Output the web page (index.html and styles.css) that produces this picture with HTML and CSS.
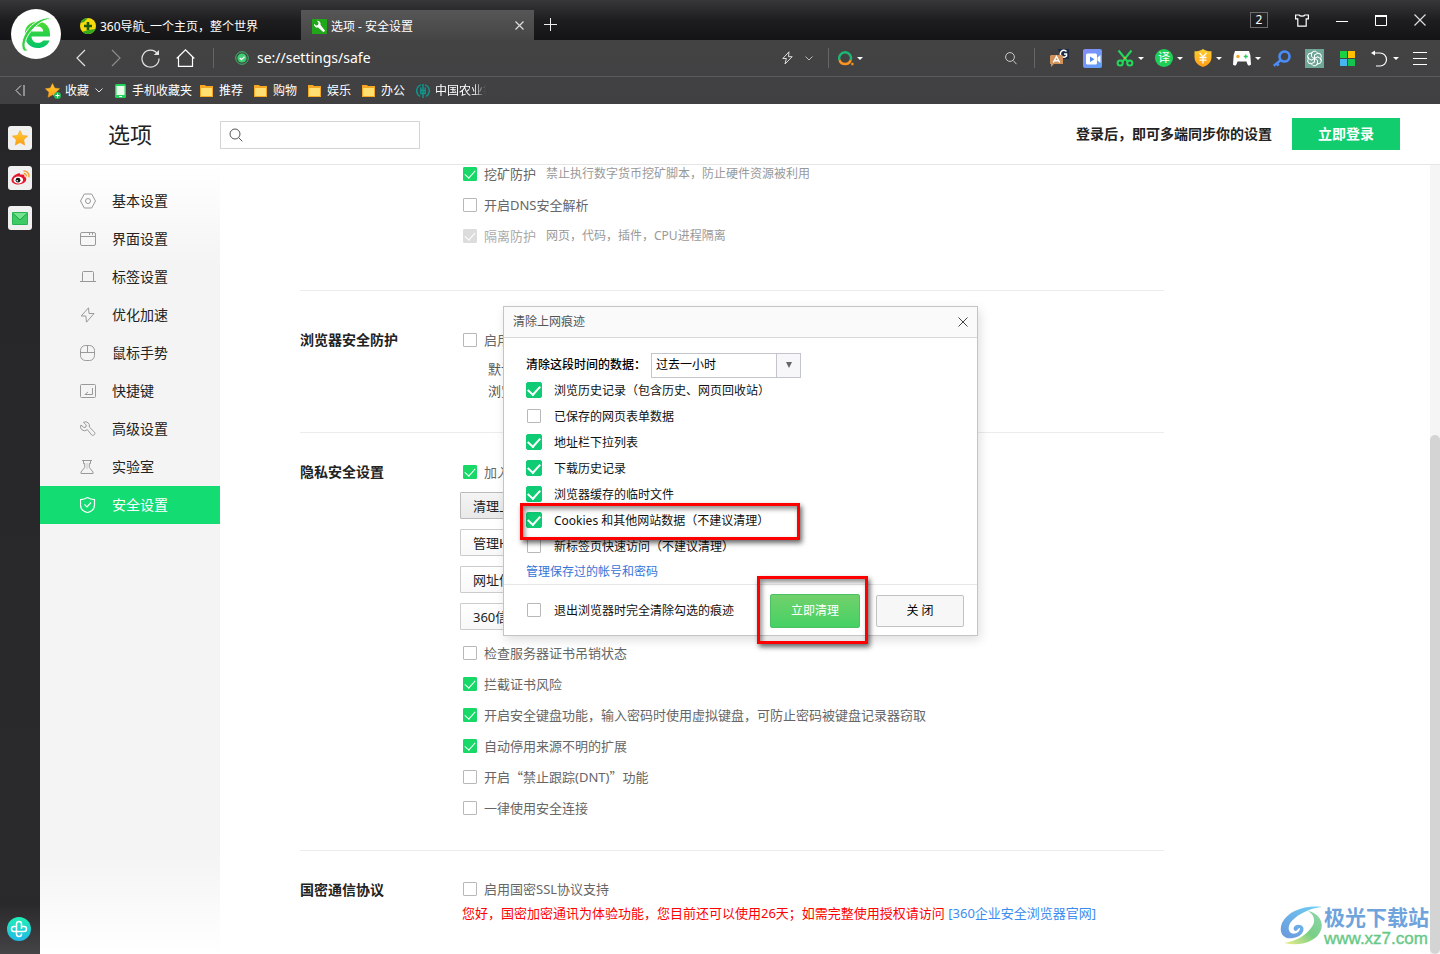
FILE: index.html
```html
<!DOCTYPE html>
<html lang="zh-CN">
<head>
<meta charset="utf-8">
<title>选项 - 安全设置</title>
<link rel="stylesheet" href="styles.css">
</head>
<body>
<svg class="defs" width="0" height="0" aria-hidden="true">
  <defs>
    <linearGradient id="gGreen" x1="0" y1="0" x2="0" y2="1"><stop offset="0" stop-color="#4fdc2c"/><stop offset="1" stop-color="#00c46a"/></linearGradient>
    <linearGradient id="gGold" x1="0" y1="0" x2="0" y2="1"><stop offset="0" stop-color="#ffcf2e"/><stop offset="1" stop-color="#ff9c17"/></linearGradient>
    <linearGradient id="gCam" x1="0" y1="0" x2="1" y2="1"><stop offset="0" stop-color="#8a8cf8"/><stop offset="1" stop-color="#5aa2fb"/></linearGradient>
    <linearGradient id="gTeal" x1="0" y1="0" x2="0" y2="1"><stop offset="0" stop-color="#1ff0b4"/><stop offset="1" stop-color="#22b8e8"/></linearGradient>
    <linearGradient id="gSwirl" x1="0" y1="1" x2="1" y2="0"><stop offset="0" stop-color="#6a97dc"/><stop offset="1" stop-color="#6fd0f5"/></linearGradient>
    <linearGradient id="gLeaf" x1="0" y1="1" x2="1" y2="0"><stop offset="0" stop-color="#f0ee8a"/><stop offset=".5" stop-color="#79cf85"/><stop offset="1" stop-color="#8fd6b0"/></linearGradient>
    <symbol id="folder" viewBox="0 0 13 12"><path d="M0 0h5l1 1h7v11H0z" fill="#f5a623"/><path d="M1 3h11v8H1z" fill="#ffdf72"/></symbol>
    <symbol id="caret" viewBox="0 0 6 3"><path d="M0 0h6L3 3z" fill="#fff"/></symbol>
    <symbol id="star" viewBox="0 0 16 16"><path d="M8 .6l2.300 4.800 5.300.7-3.900 3.700 1 5.300L8 12.500l-4.700 2.600 1-5.300L.4 6.100l5.300-.7z" fill="url(#gGold)" stroke="#f3a01c" stroke-width=".6"/></symbol>
  </defs>
</svg>

<header class="chrome">
  <button class="logo" aria-label="360">
    <svg width="34" height="40" viewBox="0 0 34 40">
      <path d="M31 22.500H12.500c.3 4.200 3 6.300 6.300 6.300 2.600 0 4.300-.8 5.400-2.300h6.300c-1.800 4.900-6.200 7.500-11.700 7.500C10.800 34 5.800 28.500 5.800 20.500S11 7.500 18.500 7.500C26.500 7.500 31 13 31 20zM12.600 17.500h11.700c-.4-3.300-2.500-5-5.600-5-3.300 0-5.400 1.900-6.100 5z" fill="url(#gGreen)"/>
      <path d="M32.500 6C31 1.500 20 4.500 12.500 11.500 3.500 20 .5 32 4.500 36.500c1.200 1 3.500.8 5.500-.5-4.500.3-5-5.500-2.500-11.500C11 16 24.500 3 32.500 6z" fill="#35d143" stroke="#fff"/>
    </svg>
  </button>
  <div class="tabbar">
    <button class="tab">
      <svg width="16" height="16" viewBox="0 0 16 16"><circle cx="8" cy="8" r="8" fill="#f8d90c"/><path d="M.6 5A8 8 0 0 1 8 0L4 4zM2.500 13.800A8 8 0 0 0 15.500 11L8 12z" fill="#35a81c"/><path d="M8 4v8M4 8h8" stroke="#1c5a12" stroke-width="2.600"/></svg>
      <span>360导航_一个主页，整个世界</span>
    </button>
    <div class="tab tab-active">
      <svg width="15" height="15" viewBox="0 0 15 15"><path d="M0 0h15v15H0z" fill="#22a61a"/><path d="M5 1.800a3.300 3.300 0 0 1 3.500 4.300l4.600 5.600-1.600 1.600-5.400-4.800A3.300 3.300 0 0 1 2 4.800l2 1.700L6 6l.6-2z" fill="#fff"/></svg>
      <span>选项 - 安全设置</span>
      <button class="plain tab-close" aria-label="关闭标签"><svg width="9" height="9" viewBox="0 0 9 9"><path d="M.5.5l8 8M8.500.5l-8 8" stroke="#ddd" stroke-width="1.200"/></svg></button>
    </div>
    <button class="plain newtab" aria-label="新标签"><svg width="13" height="13" viewBox="0 0 13 13"><path d="M6.500 0v13M0 6.500h13" stroke="#eee"/></svg></button>
    <div class="winctl">
      <button class="plain count">2</button>
      <button class="plain" aria-label="皮肤"><svg width="14" height="13" viewBox="0 0 14 13" fill="none" stroke="#fff" stroke-width="1.200"><path d="M.6 1h3.600c.5 1.600 5.100 1.600 5.600 0h3.600v3.800h-2.200v7.400H2.800V4.800H.6z"/></svg></button>
      <button class="plain" aria-label="最小化"><svg width="12" height="13" viewBox="0 0 12 13"><path d="M0 7.500h12" stroke="#fff"/></svg></button>
      <button class="plain" aria-label="最大化"><svg width="12" height="11" viewBox="0 0 12 11"><path d="M.5 1v9.500h11V1" fill="none" stroke="#fff"/><path d="M0 1h12" stroke="#fff" stroke-width="2"/></svg></button>
      <button class="plain" aria-label="关闭"><svg width="12" height="12" viewBox="0 0 12 12"><path d="M.5.5l11 11M11.500.5l-11 11" stroke="#ddd" stroke-width="1.200"/></svg></button>
    </div>
  </div>

  <div class="toolbar">
    <button class="plain nav-btn" aria-label="后退"><svg width="10" height="18" viewBox="0 0 10 18"><path d="M9 1L1 9l8 8" fill="none" stroke="#e0e0e0" stroke-width="1.200"/></svg></button>
    <button class="plain nav-btn" aria-label="前进"><svg width="10" height="18" viewBox="0 0 10 18"><path d="M1 1l8 8-8 8" fill="none" stroke="#8c8c8c" stroke-width="1.200"/></svg></button>
    <button class="plain nav-btn" aria-label="刷新"><svg width="19" height="19" viewBox="0 0 19 19"><path d="M16.500 4.800A8.500 8.500 0 1 0 18 9.500" fill="none" stroke="#e4e4e4" stroke-width="1.200"/><path d="M18 1v5h-5.200z" fill="#e4e4e4"/></svg></button>
    <button class="plain nav-btn" aria-label="主页"><svg width="19" height="18" viewBox="0 0 19 18"><path d="M.7 9.500L9.500.8l8.800 8.700M2.500 8v9.400h14V8" fill="none" stroke="#fff" stroke-width="1.200"/></svg></button>
    <span class="sep"></span>
    <svg class="secure" width="14" height="14" viewBox="0 0 14 14"><circle cx="7" cy="7" r="6.300" fill="none" stroke="#3fb968"/><circle cx="7" cy="7" r="4.600" fill="#3fcf72"/><path d="M4.800 7l1.700 1.700 3-3" fill="none" stroke="#fff" stroke-width="1.300"/></svg>
    <input class="address" type="text" aria-label="地址" value="se://settings/safe">
    <button class="plain" aria-label="加速"><svg width="11" height="14" viewBox="0 0 11 14"><path d="M7 .8L.8 7.500h3.600L3 13l7.200-7.300H6.500z" fill="none" stroke="#ddd"/></svg></button>
    <button class="plain chev" aria-label="展开"><svg width="8" height="5" viewBox="0 0 8 5"><path d="M.5.5L4 4 7.500.5" fill="none" stroke="#bbb"/></svg></button>
    <span class="sep"></span>
    <button class="plain engine" aria-label="搜索引擎">
      <svg width="16" height="15" viewBox="0 0 16 15" fill="none" stroke-width="2.400"><path d="M1.500 9A5.900 5.900 0 1 1 12.700 9" stroke="#1fb573"/><path d="M1.500 9a5.900 5.900 0 0 0 11.200 0M13.300 13h2.200" stroke="#f7931e"/></svg>
      <svg width="6" height="3"><use href="#caret"/></svg>
    </button>
    <input class="quick" type="text" aria-label="搜索">
    <button class="plain" aria-label="搜索"><svg width="12" height="13" viewBox="0 0 12 13"><circle cx="5" cy="5" r="4.400" fill="none" stroke="#ccc"/><path d="M8.200 8.500l3.300 3.700" stroke="#ccc"/></svg></button>
    <span class="sep sep-tools"></span>
    <div class="tools">
      <button class="plain tool" aria-label="翻译"><svg width="19" height="18" viewBox="0 0 19 18"><path d="M8 0h11v10h-7z" fill="#1f2b44"/><path d="M16.500 2.500A3.500 3.500 0 1 0 16.500 7V5H14" fill="none" stroke="#fff" stroke-width="1.500"/><path d="M1 6h10a2 2 0 0 1 2 2v7H4l-3 3v-3H0V7z" fill="#d0925a"/><path d="M3.300 13.500L6.500 7.500l3.200 6M4.500 11.800h4" fill="none" stroke="#fff" stroke-width="1.500"/></svg></button>
      <button class="plain tool" aria-label="录屏"><svg width="19" height="19" viewBox="0 0 19 19"><rect width="19" height="19" rx="2" fill="url(#gCam)"/><rect x="3" y="4.500" width="11" height="11" rx="1.500" fill="#fff"/><path d="M14.500 8.500L17.500 6v8l-3-2.500z" fill="#fff"/><path d="M7 7.500l4.500 2.700L7 13z" fill="#4f86f0"/></svg></button>
      <button class="plain tool tool-drop" aria-label="截图"><svg width="18" height="18" viewBox="0 0 18 18" fill="none" stroke="#22d85a" stroke-width="2"><path d="M2.500 1.500l9 11M15.500 1.500l-9 11"/><circle cx="4.200" cy="14" r="2.600"/><circle cx="13.800" cy="14" r="2.600"/><circle cx="9" cy="9" r="1" fill="#f6a821" stroke="none"/></svg><svg width="6" height="3"><use href="#caret"/></svg></button>
      <button class="plain tool tool-drop" aria-label="译"><span class="yi">译</span><svg width="6" height="3"><use href="#caret"/></svg></button>
      <button class="plain tool tool-drop" aria-label="网银"><svg width="18" height="18" viewBox="0 0 18 18"><path d="M9 0c2 1.700 5 2.300 8.500 2.300V8c0 5-3.500 8.300-8.500 10C4 16.300.5 13 .5 8V2.300C4 2.300 7 1.700 9 0z" fill="url(#gGold)"/><path d="M5.500 3.800L9 8l3.500-4.200M9 8v6.500M5.500 8.500h7M5.500 11.200h7" fill="none" stroke="#fff" stroke-width="1.300"/></svg><svg width="6" height="3"><use href="#caret"/></svg></button>
      <button class="plain tool tool-drop" aria-label="游戏"><svg width="18" height="15" viewBox="0 0 18 15"><path d="M2 0h14l1.300 4 .7 9.500c-1.500 2-3.500 1.500-4.500-3h-9C3.500 15 1.500 15.500 0 13.500L.7 4z" fill="#fff"/><circle cx="5" cy="5.500" r="1.700" fill="#f7a51d"/><path d="M12.800 3.500v4M10.800 5.500h4" stroke="#2cc763" stroke-width="1.300"/></svg><svg width="6" height="3"><use href="#caret"/></svg></button>
      <button class="plain tool" aria-label="密码"><svg width="18" height="17" viewBox="0 0 18 17"><circle cx="11.500" cy="6.500" r="5" fill="none" stroke="#4a8cf7" stroke-width="2.600"/><path d="M8 10l-7.300 5.800M3.500 12.500l2 3.200" stroke="#4a8cf7" stroke-width="2.600"/></svg></button>
      <button class="plain tool" aria-label="AI"><svg width="19" height="19" viewBox="0 0 19 19"><path d="M0 0h19v19H0z" fill="#6fa796"/><g fill="none" stroke="#fff" stroke-width="1"><path id="petal" d="M9.500 9.500L6.500 7.700V5a3 3 0 0 1 5.700-1.200L14 5"/><use href="#petal" transform="rotate(60 9.500 9.500)"/><use href="#petal" transform="rotate(120 9.500 9.500)"/><use href="#petal" transform="rotate(180 9.500 9.500)"/><use href="#petal" transform="rotate(240 9.500 9.500)"/><use href="#petal" transform="rotate(300 9.500 9.500)"/></g></svg></button>
      <button class="plain tool" aria-label="应用"><svg width="15" height="15" viewBox="0 0 15 15"><path d="M0 0h7v7H0z" fill="#1fcf42"/><path d="M8 0h7v7H8z" fill="#ffc001"/><path d="M0 8h7v7H0z" fill="#45b6f0"/><path d="M8 8h7v7H8z" fill="#14c24f"/></svg></button>
      <button class="plain tool tool-drop" aria-label="撤销"><svg width="18" height="17" viewBox="0 0 18 17"><path d="M2 3h7a6.500 6.500 0 0 1 0 13H5" fill="none" stroke="#fff" stroke-width="1.200"/><path d="M0 3l4-2.500v5z" fill="#fff"/></svg><svg width="6" height="3"><use href="#caret"/></svg></button>
      <button class="plain tool" aria-label="菜单"><svg width="14" height="13" viewBox="0 0 14 13"><path d="M0 .5h14M0 6.500h14M0 12.500h14" stroke="#fff"/></svg></button>
    </div>
  </div>

  <nav class="bookmarks">
    <button class="plain collapse" aria-label="收起"><svg width="10" height="11" viewBox="0 0 10 11"><path d="M6 .5l-5 5 5 5M9 0v11" fill="none" stroke="#ddd"/></svg></button>
    <button class="plain mark mark-fav"><svg width="16" height="16" viewBox="0 0 16 16"><use href="#star" width="15" height="15"/><circle cx="12.500" cy="12.500" r="3.500" fill="#25b85a"/><path d="M12.500 10.500v4M10.500 12.500h4" stroke="#fff"/></svg><span>收藏</span><svg width="8" height="5" viewBox="0 0 8 5"><path d="M.5.5L4 4 7.500.5" fill="none" stroke="#ddd"/></svg></button>
    <a class="mark mark-phone" href="#"><svg width="11" height="14" viewBox="0 0 11 14"><rect width="11" height="14" rx="1.500" fill="#20d45c"/><path d="M1.500 2h8v9h-8z" fill="#e9fbe9"/><path d="M4 12.500h3" stroke="#fff"/></svg><span>手机收藏夹</span></a>
    <a class="mark" href="#"><svg width="13" height="12"><use href="#folder"/></svg><span>推荐</span></a>
    <a class="mark" href="#"><svg width="13" height="12"><use href="#folder"/></svg><span>购物</span></a>
    <a class="mark" href="#"><svg width="13" height="12"><use href="#folder"/></svg><span>娱乐</span></a>
    <a class="mark" href="#"><svg width="13" height="12"><use href="#folder"/></svg><span>办公</span></a>
    <a class="mark mark-bank" href="#"><svg width="14" height="14" viewBox="0 0 14 14"><path d="M5 .9a6.300 6.300 0 0 0-1 11.500M9 .9a6.300 6.300 0 0 1 1 11.500M7 0v14M4.800 3.500v6h4.400v-6M4.800 6.500h4.400" fill="none" stroke="#12938c" stroke-width="1.500"/></svg><span class="fade">中国农业银</span></a>
  </nav>
</header>

<div class="body">
  <aside class="rail">
    <button class="app" aria-label="收藏"><svg width="16" height="16"><use href="#star"/></svg></button>
    <button class="app" aria-label="微博"><svg width="19" height="16" viewBox="0 0 19 16"><path d="M7 3.500c1.500-.6 2.600-.2 2.300 1.300C12 4 14 4.500 13.300 6.600c4 1.400 2 7.900-5.800 7.900C3.500 14.500.5 12.800.5 10 .5 7.500 4 4.300 7 3.500z" fill="#e6162d"/><ellipse cx="7.300" cy="10" rx="4.800" ry="3.400" fill="#fff"/><circle cx="7" cy="10.200" r="2.400" fill="#111"/><circle cx="6.200" cy="10.800" r=".8" fill="#fff"/><path d="M12.500 1a5 5 0 0 1 5.300 6.300M12.800 3.500a2.600 2.600 0 0 1 2.600 3" fill="none" stroke="#f39a2a" stroke-width="1.300"/></svg></button>
    <button class="app" aria-label="邮件"><svg width="16" height="13" viewBox="0 0 16 13"><rect width="16" height="13" rx="1" fill="#3ecb66"/><path d="M0 0h16L8 7.500z" fill="#74e390"/><path d="M.5 1L8 8l7.500-7" fill="none" stroke="#1ea24a"/><rect x=".5" y=".5" width="15" height="12" rx="1" fill="none" stroke="#28b255"/></svg></button>
    <button class="plain rail-end" aria-label="健康"><svg width="24" height="24" viewBox="0 0 24 24"><circle cx="12" cy="12" r="12" fill="url(#gTeal)"/><path d="M9.500 14.500H7a2.500 2.500 0 0 1 0-5h3M14.500 12V7a2.500 2.500 0 0 0-5 0v10a2.500 2.500 0 0 0 5 0v-.5M14 9.500h3a2.500 2.500 0 0 1 0 5H9.500" fill="none" stroke="#fff" stroke-width="1.500"/></svg></button>
  </aside>

  <div class="page">
    <header class="page-head">
      <h1>选项</h1>
      <label class="search"><svg width="14" height="14" viewBox="0 0 14 14"><circle cx="6" cy="6" r="5" fill="none" stroke="#555"/><path d="M9.700 9.700l3.600 3.600" stroke="#555"/></svg><input type="text" aria-label="搜索设置"></label>
      <span class="sync">登录后，即可多端同步你的设置</span>
      <button class="login">立即登录</button>
    </header>
    <div class="page-body">
      <nav class="menu">
        <a href="#"><svg viewBox="0 0 16 16"><path d="M4.300 1h7.400l3.800 7-3.800 7H4.300L.5 8z"/><circle cx="8" cy="8" r="2.500"/></svg>基本设置</a>
        <a href="#"><svg viewBox="0 0 16 16"><rect x=".5" y="1.500" width="15" height="13" rx="1.500"/><path d="M.5 5.500h15M9.500 2v2M12.500 2v2"/></svg>界面设置</a>
        <a href="#"><svg viewBox="0 0 16 16"><path d="M2.500 12.500v-9a1 1 0 0 1 1-1h9a1 1 0 0 1 1 1v9M0 12.500h16"/></svg>标签设置</a>
        <a href="#"><svg viewBox="0 0 16 16"><path d="M8.500.8L1.200 9h4.600l.7 6.200L14 6.500H9z"/></svg>优化加速</a>
        <a href="#"><svg viewBox="0 0 16 16"><rect x=".5" y=".5" width="14" height="15" rx="5"/><path d="M.5 7.500h14M7.500.5v7"/></svg>鼠标手势</a>
        <a href="#"><svg viewBox="0 0 16 16"><rect x=".5" y="1.500" width="15" height="13" rx="1"/><path d="M12.500 5v6.500H5l3-2.500M5 11.500V11"/></svg>快捷键</a>
        <a href="#"><svg viewBox="0 0 16 16"><path d="M3.500 1.300A4 4 0 0 1 9.300 6l5.200 5.200c1.300 1.700-1 4.200-2.800 2.800L7.300 8.600A4 4 0 0 1 .9 4l3 2.500 2-.4.400-2z"/></svg>高级设置</a>
        <a href="#"><svg viewBox="0 0 16 16"><path d="M2 1.500h10M3.500 1.500v3h1.200v4L1 13v1.500h12V13L9.300 8.500v-4h1.200v-3"/><path d="M7 4.500v6" stroke-dasharray="1 1"/></svg>实验室</a>
        <a class="current" href="#"><svg viewBox="0 0 16 16"><path d="M7.500.6c2 1.300 4.300 2 7 2V8c0 4-3 6.500-7 7.500C3.500 14.500.5 12 .5 8V2.600c2.700 0 5-.7 7-2z"/><path d="M4.500 7.500L7 10l4-4.500"/></svg>安全设置</a>
      </nav>

      <main class="settings">
        <section class="group group-top">
          <div class="fields">
            <label class="row"><input type="checkbox" checked>挖矿防护<small>禁止执行数字货币挖矿脚本，防止硬件资源被利用</small></label>
            <label class="row"><input type="checkbox">开启DNS安全解析</label>
            <label class="row row-off"><input type="checkbox" checked disabled>隔离防护<small>网页，代码，插件，CPU进程隔离</small></label>
          </div>
        </section>
        <section class="group group-guard">
          <h2>浏览器安全防护</h2>
          <div class="fields">
            <label class="row"><input type="checkbox">启用</label>
            <p class="note">默认<br>浏览</p>
          </div>
        </section>
        <section class="group">
          <h2>隐私安全设置</h2>
          <div class="fields">
            <label class="row"><input type="checkbox" checked>加入</label>
            <div class="actions">
              <button class="pressed">清理上</button>
              <button>管理H</button>
              <button>网址信</button>
              <button>360信</button>
            </div>
            <label class="row"><input type="checkbox">检查服务器证书吊销状态</label>
            <label class="row"><input type="checkbox" checked>拦截证书风险</label>
            <label class="row"><input type="checkbox" checked>开启安全键盘功能，输入密码时使用虚拟键盘，可防止密码被键盘记录器窃取</label>
            <label class="row"><input type="checkbox" checked>自动停用来源不明的扩展</label>
            <label class="row"><input type="checkbox"><span>开启<span class="wide">“</span>禁止跟踪(DNT)<span class="wide">”</span>功能</span></label>
            <label class="row"><input type="checkbox">一律使用安全连接</label>
          </div>
        </section>
        <section class="group">
          <h2>国密通信协议</h2>
          <div class="fields">
            <label class="row row-lead"><input type="checkbox">启用国密SSL协议支持</label>
            <p class="trial">您好，国密加密通讯为体验功能，您目前还可以使用26天；如需完整使用授权请访问 <a href="#">[360企业安全浏览器官网]</a></p>
          </div>
        </section>
      </main>
      <div class="scroll"><div class="thumb"></div></div>
    </div>

    <div class="dialog" role="dialog" aria-labelledby="dlgTitle">
      <div class="dlg-head"><span id="dlgTitle">清除上网痕迹</span><button class="plain" aria-label="关闭"><svg width="10" height="10" viewBox="0 0 10 10"><path d="M.5.5l9 9M9.500.5l-9 9" stroke="#444"/></svg></button></div>
      <div class="dlg-body">
        <div class="range"><label for="range">清除这段时间的数据：</label><span class="pick"><select id="range"><option>过去一小时</option></select><span class="arrow"><svg width="6" height="6" viewBox="0 0 6 6"><path d="M0 0h6L3 6z" fill="#666"/></svg></span></span></div>
        <label class="opt"><input type="checkbox" checked>浏览历史记录（包含历史、网页回收站）</label>
        <label class="opt"><input type="checkbox">已保存的网页表单数据</label>
        <label class="opt"><input type="checkbox" checked>地址栏下拉列表</label>
        <label class="opt"><input type="checkbox" checked>下载历史记录</label>
        <label class="opt"><input type="checkbox" checked>浏览器缓存的临时文件</label>
        <label class="opt"><input type="checkbox" checked>Cookies 和其他网站数据（不建议清理）</label>
        <label class="opt"><input type="checkbox">新标签页快速访问（不建议清理）</label>
        <a class="accounts" href="#">管理保存过的帐号和密码</a>
      </div>
      <div class="dlg-foot">
        <label class="opt"><input type="checkbox">退出浏览器时完全清除勾选的痕迹</label>
        <button class="go">立即清理</button>
        <button class="shut">关 闭</button>
      </div>
      <div class="frame frame-cookies"></div>
      <div class="frame frame-go"></div>
    </div>
  </div>
</div>

<div class="watermark">
  <svg width="44" height="40" viewBox="0 0 44 40">
    <path d="M42 1C25-1 8 5 2 17c-4 10 2 17 11 15 8-1 12-7 10-11-2-3-7-3-9 0-1 2 0 4 2 4 2-1 2-3 4-3 0 4-5 7-9 5-4-3-3-10 4-15C22 6 32 2 42 1z" fill="url(#gSwirl)"/>
    <path d="M28 5c7 4 8 11 3 17-5 7-14 13-27 15 18 4 33-2 37-13 3-9-3-17-13-19z" fill="url(#gLeaf)"/>
  </svg>
  <div><div class="wm-name">极光下载站</div><div class="wm-url">www.xz7.com</div></div>
</div>
</body>
</html>
```
FILE: styles.css
```css
* { box-sizing: border-box; }

body {
  margin: 0;
  height: 100vh;
  display: flex;
  flex-direction: column;
  overflow: hidden;
  position: relative;
  background: #fff;
  color: #222;
  font: 13px/20px "Noto Sans", "Noto Sans CJK SC", sans-serif;
}

.defs { position: absolute; }
h1, h2, p { margin: 0; }
a { text-decoration: none; color: inherit; }
svg { flex: none; display: block; }
button, input, select { font: inherit; color: inherit; }
button { padding: 0; cursor: pointer; }
.plain { border: 0; background: none; display: flex; align-items: center; justify-content: center; }

/* browser chrome */
.chrome { position: relative; flex: none; background: linear-gradient(#454545, #404042); color: #fff; font-size: 12px; }

.logo {
  position: absolute;
  left: 11px;
  top: 9px;
  width: 50px;
  height: 50px;
  border: 0;
  border-radius: 50%;
  background: #fff;
  display: flex;
  align-items: center;
  justify-content: center;
}

.tabbar {
  height: 40px;
  padding: 10px 14px 0 69px;
  display: flex;
  background: linear-gradient(#373739, #1e1e20 50%, #141416);
}

.tab {
  width: 232px;
  height: 30px;
  padding: 0 10px 0 11px;
  border: 0;
  background: none;
  display: flex;
  align-items: center;
  gap: 4px;
  color: #fff;
}
.tab span { padding-top: 3px; }
.tab > svg { margin-top: 2px; }
.tab-active { width: 233px; background: linear-gradient(#565656, #454545); }
.tab-close { margin-left: auto; }
.newtab { width: 33px; height: 28px; }
.winctl { margin-left: auto; height: 20px; display: flex; align-items: center; gap: 27px; }
.count { width: 18px; height: 16px; border: 1px solid #6d6d6d; line-height: 14px; }

.toolbar { height: 36px; padding: 0 8px 0 63px; display: flex; align-items: center; }
.nav-btn { width: 35px; height: 30px; }
.sep { width: 1px; height: 20px; margin: 0 9px; background: #666; }
.nav-btn + .sep { margin: 0 21px 0 10px; }
.address {
  flex: 1;
  min-width: 0;
  padding: 0 8px;
  border: 0;
  outline: 0;
  background: none;
  font-size: 14px;
}
.chev { width: 32px; height: 20px; margin-right: -6px; }
.engine { gap: 3px; }
.quick { width: 142px; border: 0; outline: 0; background: none; }
.sep.sep-tools { margin: 0 12px 0 17px; }
.tools { display: flex; align-items: center; gap: 8px; }
.tool { width: 25px; height: 28px; }
.tool-drop { width: 31px; padding-left: 3px; gap: 4px; }
.yi { width: 18px; height: 18px; border-radius: 50%; background: #1ed05a; line-height: 17px; }

.bookmarks { height: 28px; padding: 0 15px; border-top: 1px solid #5b5b5c; display: flex; align-items: center; gap: 11px; }
.mark { display: flex; align-items: center; gap: 6px; }
.collapse { margin-right: 9px; }
.mark-fav { gap: 4px; }
.mark-fav span { margin-right: 2px; }
.mark-phone { margin: 0 -3px 0 1px; }
.mark-bank { gap: 5px; }
.fade { width: 51px; overflow: hidden; white-space: nowrap; -webkit-mask: linear-gradient(90deg, #000 75%, transparent); mask: linear-gradient(90deg, #000 75%, transparent); }

/* side rail */
.body { flex: 1; min-height: 0; display: flex; }
.rail {
  width: 40px;
  padding: 22px 0 13px;
  display: flex;
  flex-direction: column;
  align-items: center;
  gap: 16px;
  background: linear-gradient(#262628, #2a2a2c 90%, #29292b 94%, #444446);
}
.app {
  width: 24px;
  height: 24px;
  border: 0;
  border-radius: 3px;
  background: #f0f0f0;
  display: flex;
  align-items: center;
  justify-content: center;
}
.rail-end { margin: auto 2px 0 0; }

/* settings page */
.page { position: relative; flex: 1; min-width: 0; display: flex; flex-direction: column; }
.page-head {
  flex: none;
  height: 61px;
  padding: 0 40px 0 68px;
  border-bottom: 1px solid #e6e6e6;
  display: flex;
  align-items: center;
}
h1 { font-size: 22px; line-height: 32px; font-weight: 400; }
.search { width: 200px; height: 28px; margin: 2px 0 0 68px; padding: 0 8px; border: 1px solid #d4d4d4; display: flex; align-items: center; gap: 8px; }
.search input { flex: 1; min-width: 0; border: 0; outline: 0; }
.sync { margin-left: auto; font-size: 14px; font-weight: 700; }
.login { width: 108px; height: 32px; margin-left: 20px; border: 0; background: #11cd6e; color: #fff; font-size: 14px; font-weight: 700; }

.page-body { flex: 1; min-height: 0; display: flex; overflow: hidden; }
.menu {
  width: 180px;
  flex: none;
  padding-top: 17px;
  background: linear-gradient(#fff, #f4f4f4 100px, #f4f4f4 690px, #fff);
}
.menu a { height: 38px; padding-left: 40px; display: flex; align-items: center; gap: 16px; font-size: 14px; }
.menu svg { width: 16px; height: 16px; fill: none; stroke: #999; }
.menu .current { background: #13dc72; color: #fff; }
.menu .current svg { stroke: #fff; stroke-width: 1.2; }

.settings { flex: 1; min-width: 0; max-width: 944px; margin-top: -6px; padding-left: 80px; }
.group {
  padding: 24px 0 26px;
  border-bottom: 1px solid #ececec;
  display: grid;
  grid-template-columns: 160px 1fr;
}
.fields { grid-column: 2; }
.group:last-child { border: 0; }
.group-top { padding: 0 0 38px; }
.group-guard { padding: 34px 0 30px; }
h2 { font-size: 14px; line-height: 30px; font-weight: 700; }
.row { height: 31px; padding: 0 0 2px 3px; display: flex; align-items: center; gap: 7px; color: #666; white-space: nowrap; }
.row small { margin-left: 3px; font-size: 12px; color: #999; }
.row-off { color: #aaa; }
.row-lead { height: 29px; }
.wide { font-family: "Noto Sans CJK SC", sans-serif; }
.note { padding: 2px 0 0 28px; color: #555; line-height: 22px; }

input[type="checkbox"] {
  appearance: none;
  flex: none;
  width: 14px;
  height: 14px;
  margin: 0;
  border: 1px solid #b8b8b8;
  border-radius: 1px;
  background: #fff;
  display: flex;
  justify-content: center;
}
input[type="checkbox"]:checked { border-color: #18d868; background: #18d868; }
input[type="checkbox"]:checked::after {
  content: "";
  width: 5px;
  height: 9px;
  border: solid #fff;
  border-width: 0 1px 1px 0;
  transform: rotate(42deg);
}
input[type="checkbox"]:disabled { border-color: #dcdcdc; background: #dcdcdc; }

.actions { padding: 4px 0 8px; display: flex; flex-direction: column; align-items: flex-start; gap: 10px; }
.actions button { height: 27px; min-width: 120px; padding: 0 12px; border: 1px solid #ccc; border-radius: 1px; background: linear-gradient(#fff, #f8f8f8); text-align: left; }
.actions .pressed { background: linear-gradient(#f4f4f4, #e9e9e9); border-color: #bbb; }
.trial { padding-left: 2px; line-height: 18px; color: #f00; white-space: nowrap; }
.trial a { color: #3c8cf0; }

.scroll { width: 10px; margin-left: auto; padding-top: 270px; background: #f5f5f5; display: flex; }
.thumb { flex: 1; border-radius: 5px; background: #d4d4d4; }

/* dialog */
.dialog {
  position: absolute;
  left: calc(50% - 237px);
  top: 202px;
  width: 475px;
  border: 1px solid #c4c4c4;
  background: #fff;
  box-shadow: 2px 4px 10px rgba(0, 0, 0, .13);
  font-size: 12px;
}
.dlg-head { height: 31px; padding: 0 9px; border-bottom: 1px solid #d9d9d9; background: #fafafa; color: #555; display: flex; align-items: center; justify-content: space-between; }
.dlg-body { padding: 14px 22px 0; border-bottom: 1px solid #e6e6e6; }
.range { height: 26px; display: flex; align-items: center; color: #000; font-weight: 500; }
.pick { width: 150px; height: 25px; margin-left: 5px; border: 1px solid #c3c5cc; display: flex; font-weight: 400; }
.pick select { flex: 1; padding: 0 4px; border: 0; background: #fff; appearance: none; }
.arrow { width: 24px; border-left: 1px solid #c3c5cc; background: #f7f7f9; display: flex; align-items: center; justify-content: center; }
.opt { height: 26px; display: flex; align-items: center; gap: 12px; color: #111; }
.opt input[type="checkbox"] { margin: 0 1px 2px; }
.opt input[type="checkbox"]:checked { width: 16px; height: 16px; margin: 0 0 2px; border-radius: 2px; border-color: #0fcb73; background: #0fcb73; }
.opt input[type="checkbox"]:checked::after { width: 6px; height: 10px; border-width: 0 2px 2px 0; }
.accounts { display: block; line-height: 24px; color: #3773d6; }
.dlg-foot { height: 50px; padding: 2px 13px 0 22px; display: flex; align-items: center; }
.dlg-foot .opt { flex: 1; }
.go { width: 90px; height: 34px; border: 1px solid #4cc063; border-radius: 2px; background: linear-gradient(#72d16c, #45d164); color: #fff; }
.shut { width: 88px; height: 32px; margin-left: 16px; border: 1px solid #c2c2c2; border-radius: 2px; background: #f7f7f7; color: #000; }

.frame { position: absolute; border: 3px solid #f00; box-shadow: 2px 3px 5px rgba(0, 0, 0, .6), inset 2px 3px 5px rgba(0, 0, 0, .45); pointer-events: none; }
.frame-cookies { left: 16px; top: 196px; width: 280px; height: 37px; }
.frame-go { left: 253px; top: 269px; width: 111px; height: 68px; }

.watermark { position: absolute; right: 11px; bottom: 6px; display: flex; align-items: center; }
.wm-name { font-size: 21px; line-height: 26px; font-weight: 700; color: #6fa3dc; }
.wm-url { font: 17px/18px "Liberation Sans", Arial, sans-serif; color: #67c987; -webkit-text-stroke: 0.4px #67c987; }
```
